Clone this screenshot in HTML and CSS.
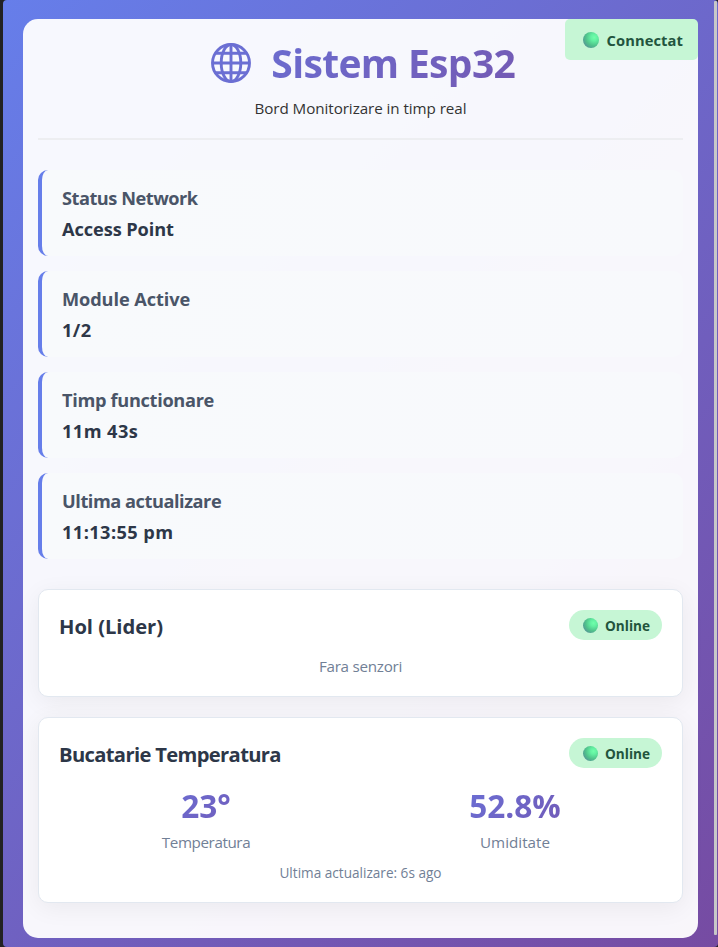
FILE: index.html
```html
<!DOCTYPE html>
<html lang="ro">
<head>
<meta charset="utf-8">
<title>Sistem Esp32</title>
<link rel="stylesheet" href="styles.css">
</head>
<body>
<div class="frame">
  <main class="panel">
    <div class="connection"><i class="dot"></i><span class="t-conn">Connectat</span></div>
    <header class="header">
      <h1 class="title">
        <svg class="globe" viewBox="0 0 40 40" fill="none" stroke="#6b6fd3" stroke-width="2.9">
          <circle cx="20" cy="20" r="18.5"/>
          <ellipse cx="20" cy="20" rx="9.8" ry="18.5"/>
          <path d="M20 1v38M1 20h38M4.5 10.3h31M4.5 29.7h31"/>
        </svg>
        <span class="grad t-title">Sistem Esp32</span>
      </h1>
      <p class="subtitle"><span class="t-sub">Bord Monitorizare in timp real</span></p>
    </header>
    <section class="stats">
      <div class="stat"><h3><span class="t-s1">Status Network</span></h3><p><span class="t-v1">Access Point</span></p></div>
      <div class="stat"><h3><span class="t-s2">Module Active</span></h3><p><span class="t-v2">1/2</span></p></div>
      <div class="stat"><h3><span class="t-s3">Timp functionare</span></h3><p><span class="t-v3">11m 43s</span></p></div>
      <div class="stat"><h3><span class="t-s4">Ultima actualizare</span></h3><p><span class="t-v4">11:13:55 pm</span></p></div>
    </section>
    <section class="modules">
      <article class="module">
        <div class="module-head"><h2><span class="t-hol">Hol (Lider)</span></h2><div class="badge"><i class="dot"></i><span class="t-on">Online</span></div></div>
        <p class="empty"><span class="t-fara">Fara senzori</span></p>
      </article>
      <article class="module">
        <div class="module-head"><h2><span class="t-buc">Bucatarie Temperatura</span></h2><div class="badge"><i class="dot"></i><span class="t-on">Online</span></div></div>
        <div class="readings">
          <div class="reading"><div class="number"><span class="t-n1">23°</span></div><div class="caption"><span class="t-c1">Temperatura</span></div></div>
          <div class="reading"><div class="number"><span class="t-n2">52.8%</span></div><div class="caption"><span class="t-c2">Umiditate</span></div></div>
        </div>
        <p class="updated"><span class="t-upd">Ultima actualizare: 6s ago</span></p>
      </article>
    </section>
  </main>
  <div class="scrollbar"></div>
</div>
</body>
</html>
```
FILE: styles.css
```css
* { box-sizing: border-box; margin: 0; padding: 0; }
html { background: #222; }
body { font-family: "Open Sans", "Noto Sans", sans-serif; font-size: 16px; color: #333; height: 947px; padding-left: 3px; overflow: hidden; }
span { white-space: nowrap; }
.frame { height: 947px; display: flex; justify-content: space-between; padding: 19px 0 9px 20px; border-radius: 4px; background: linear-gradient(135deg, #667eea 0%, #764ba2 100%); }
.scrollbar { width: 3px; margin: -18px 1px 3px 0; background: #c8c8c8; border-radius: 1px; }
.panel { position: relative; width: 675px; height: 919px; padding: 15px; border-radius: 15px; background: rgba(255, 255, 255, .95); }
.connection { position: absolute; top: 0; right: 0; width: 133px; height: 41px; display: flex; align-items: center; padding: 1px 0 0 18px; gap: 7.5px; border-radius: 5px; background: #c6f6d5; color: #22543d; font-size: 14.7px; font-weight: 700; letter-spacing: .1px; }
.dot { width: 16px; height: 16px; border-radius: 50%; background: radial-gradient(circle at 70% 34%, #70ffab 0%, #62f0a1 22%, #50c18b 54%, #559397 82%); }
.header { text-align: center; padding-bottom: 17px; border-bottom: 2px solid #edeef1; margin-bottom: 30px; }
.title { display: flex; align-items: center; justify-content: center; gap: 20.5px; height: 58px; padding-left: 5px; line-height: 58px; font-size: 39px; font-weight: 700; letter-spacing: -.65px; }
.globe { width: 40px; height: 40px; }
.grad { background: linear-gradient(135deg, #6b6dd0, #7459b3); -webkit-background-clip: text; background-clip: text; color: transparent; }
.subtitle { margin-top: 4px; padding-bottom: 1px; line-height: 24px; font-size: 15.2px; letter-spacing: -.06px; }
.stats { display: grid; gap: 15px; margin-bottom: 30px; }
.stat { height: 86px; padding: 16px 20px 14px; border-left: 4px solid #667eea; border-radius: 10px; background: linear-gradient(90deg, #f8fafc, #f8f9fc); }
.stat h3 { font-size: 18.2px; line-height: 25px; font-weight: 700; color: #4a5568; }
.stat p { margin-top: 6px; font-size: 18.2px; line-height: 25px; font-weight: 700; color: #2d3748; }
.t-s1 { letter-spacing: -.48px; }
.t-s2 { letter-spacing: -.1px; }
.t-s3 { letter-spacing: -.32px; }
.t-s4 { letter-spacing: -.46px; }
.t-v1 { letter-spacing: -.08px; }
.t-v2, .t-v3, .t-v4 { letter-spacing: .42px; }
.modules { display: grid; gap: 20px; }
.module { height: 108px; padding: 20px; border: 1px solid #e2e8f0; border-radius: 10px; background: #fff; box-shadow: 0 5px 25px rgba(0, 0, 0, .06); text-align: center; }
.module + .module { height: 186px; }
.module-head { display: flex; justify-content: space-between; align-items: center; height: 30px; }
.module h2 { padding-top: 2px; font-size: 20.2px; line-height: 30px; font-weight: 700; color: #2d3748; }
.t-hol { letter-spacing: -.05px; }
.t-buc { letter-spacing: -.66px; }
.badge { width: 93px; height: 30px; display: flex; align-items: center; gap: 7px; padding: 1px 0 0 14px; border-radius: 15px; background: #c6f6d5; color: #22543d; font-size: 13.6px; font-weight: 700; }
.badge .dot { width: 15px; height: 15px; }
.empty { margin-top: 15px; line-height: 22px; font-size: 15.2px; color: #718096; letter-spacing: -.25px; }
.readings { display: grid; grid-template-columns: 1fr 1fr; gap: 15px; margin-top: 15px; }
.number { height: 48px; line-height: 46px; font-size: 31.6px; font-weight: 700; }
.number span { display: block; background: linear-gradient(135deg, #667eea, #764ba2); -webkit-background-clip: text; background-clip: text; color: transparent; }
.caption { line-height: 23px; padding-bottom: 1px; font-size: 15.2px; color: #718096; }
.t-c1 { letter-spacing: -.4px; }
.updated { margin-top: 8px; line-height: 20px; font-size: 13.6px; color: #718096; }
```
